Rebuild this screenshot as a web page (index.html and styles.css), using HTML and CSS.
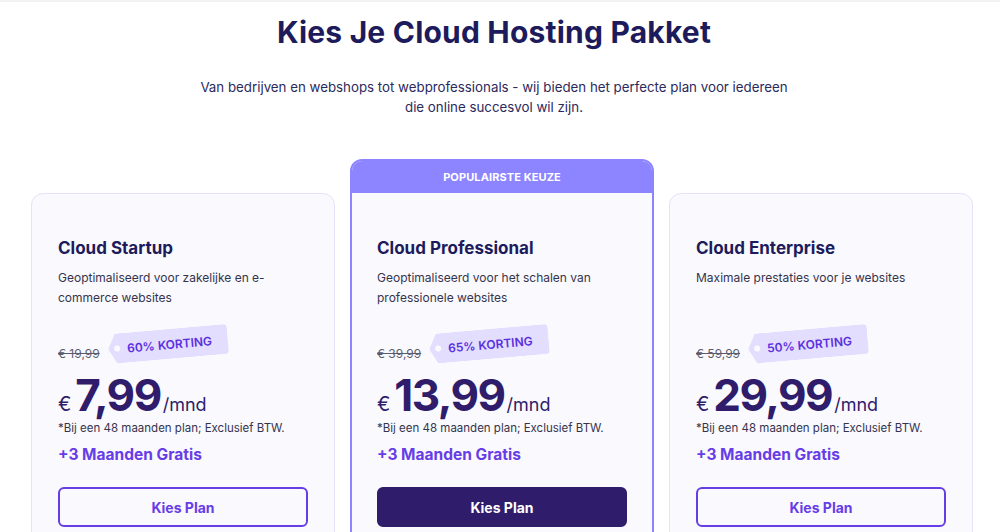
FILE: index.html
```html
<!DOCTYPE html>
<html lang="nl">
<head>
<meta charset="utf-8">
<title>Kies Je Cloud Hosting Pakket</title>
<link rel="stylesheet" href="styles.css">
</head>
<body>
<main class="page">
  <header class="intro">
    <h1 class="intro-title">Kies Je Cloud Hosting Pakket</h1>
    <p class="intro-text">Van bedrijven en webshops tot webprofessionals - wij bieden het perfecte plan voor iedereen<br>die online succesvol wil zijn.</p>
  </header>

  <section class="plans">
    <article class="plan">
      <div class="plan-body">
        <h2 class="plan-name">Cloud Startup</h2>
        <p class="plan-desc">Geoptimaliseerd voor zakelijke en e-commerce websites</p>
        <div class="discount-row">
          <span class="old-price">€ 19,99</span>
          <span class="tag">60% KORTING</span>
        </div>
        <div class="price-row">
          <span class="currency">€</span><span class="amount">7,99</span><span class="period">/mnd</span>
        </div>
        <p class="footnote">*Bij een 48 maanden plan; Exclusief BTW.</p>
        <p class="bonus">+3 Maanden Gratis</p>
        <button class="plan-btn">Kies Plan</button>
      </div>
    </article>

    <article class="plan plan-popular">
      <div class="plan-banner">POPULAIRSTE KEUZE</div>
      <div class="plan-body">
        <h2 class="plan-name">Cloud Professional</h2>
        <p class="plan-desc">Geoptimaliseerd voor het schalen van professionele websites</p>
        <div class="discount-row">
          <span class="old-price">€ 39,99</span>
          <span class="tag">65% KORTING</span>
        </div>
        <div class="price-row">
          <span class="currency">€</span><span class="amount">13,99</span><span class="period">/mnd</span>
        </div>
        <p class="footnote">*Bij een 48 maanden plan; Exclusief BTW.</p>
        <p class="bonus">+3 Maanden Gratis</p>
        <button class="plan-btn plan-btn-filled">Kies Plan</button>
      </div>
    </article>

    <article class="plan">
      <div class="plan-body">
        <h2 class="plan-name">Cloud Enterprise</h2>
        <p class="plan-desc">Maximale prestaties voor je websites</p>
        <div class="discount-row">
          <span class="old-price">€ 59,99</span>
          <span class="tag">50% KORTING</span>
        </div>
        <div class="price-row">
          <span class="currency">€</span><span class="amount">29,99</span><span class="period">/mnd</span>
        </div>
        <p class="footnote">*Bij een 48 maanden plan; Exclusief BTW.</p>
        <p class="bonus">+3 Maanden Gratis</p>
        <button class="plan-btn">Kies Plan</button>
      </div>
    </article>
  </section>
</main>
</body>
</html>
```

FILE: styles.css
```css
* { box-sizing: border-box; }

html, body {
  margin: 0;
  padding: 0;
  background: #ffffff;
  overflow: hidden;
}

body {
  font-family: "Inter", "Noto Sans", "Liberation Sans", sans-serif;
  color: #1d1b5c;
  border-top: 2px solid #f2f2f4;
}

.page {
  width: 1000px;
  height: 530px;
  overflow: hidden;
}

.intro {
  text-align: center;
  padding: 12px 12px 0 0;
}

.intro-title {
  margin: 0;
  font-size: 30px;
  line-height: 36px;
  font-weight: 700;
  letter-spacing: 0.2px;
  color: #1d1b5c;
}

.intro-text {
  margin: 27px 0 0;
  font-size: 13.3px;
  line-height: 20px;
  color: #2c2a5c;
}

.plans {
  display: flex;
  gap: 15px;
  padding: 42px 0 0 31px;
  align-items: flex-start;
}

.plan {
  width: 304px;
  margin-top: 34px;
  border: 1px solid #e3e3fb;
  border-radius: 12px;
  background: #f9f9fe;
  height: 400px;
}

.plan-popular {
  margin-top: 0;
  border: 2px solid #8c85ff;
  height: 434px;
  overflow: hidden;
}

.plan-banner {
  height: 32px;
  background: #8c85ff;
  color: #ffffff;
  font-size: 11px;
  font-weight: 700;
  line-height: 32px;
  text-align: center;
  letter-spacing: 0.1px;
}

.plan-body {
  padding: 42px 26px 24px;
}

.plan-popular .plan-body {
  padding: 43px 25px 24px;
}

.plan-name {
  margin: 0;
  font-size: 17px;
  line-height: 24px;
  font-weight: 700;
  color: #1d1b5c;
}

.plan-desc {
  margin: 8px 0 0;
  font-size: 12px;
  line-height: 20px;
  min-height: 40px;
  color: #36344d;
}

.discount-row {
  display: flex;
  align-items: center;
  height: 24px;
  margin-top: 33px;
}

.old-price {
  font-size: 12px;
  color: #5a5c6e;
  text-decoration: line-through;
}

.tag {
  position: relative;
  display: inline-flex;
  align-items: center;
  height: 30px;
  margin-left: 8px;
  padding: 0 16px 0 19px;
  background: #e3defd;
  color: #5a2fe0;
  font-size: 12px;
  font-weight: 600;
  border-radius: 0 4px 4px 0;
  clip-path: polygon(8px 0, 100% 0, 100% 100%, 8px 100%, 0 50%);
  transform: translateY(-9px) rotate(-5deg);
}

.tag::before {
  content: "";
  position: absolute;
  left: 6px;
  top: 50%;
  width: 6px;
  height: 6px;
  margin-top: -3px;
  border-radius: 50%;
  background: #f9f9fe;
}

.price-row {
  display: flex;
  align-items: baseline;
  height: 48px;
  line-height: 48px;
  margin-top: 6px;
  color: #2f1c6a;
}

.currency {
  font-size: 20px;
  margin-right: 4px;
}

.amount {
  font-size: 44px;
  font-weight: 700;
  letter-spacing: -1.5px;
}

.period {
  font-size: 18px;
  margin-left: 2px;
}

.footnote {
  margin: 0;
  font-size: 11.5px;
  line-height: 18px;
  color: #36344d;
}

.bonus {
  margin: 7px 0 0;
  font-size: 15.5px;
  line-height: 22px;
  font-weight: 700;
  color: #673de6;
}

.plan-btn {
  display: block;
  width: 250px;
  height: 40px;
  margin-top: 21px;
  border: 2px solid #673de6;
  border-radius: 6px;
  background: transparent;
  color: #673de6;
  font-family: inherit;
  font-size: 14px;
  font-weight: 700;
  cursor: pointer;
}

.plan-btn-filled {
  background: #2f1c6a;
  border-color: #2f1c6a;
  color: #ffffff;
}
```
